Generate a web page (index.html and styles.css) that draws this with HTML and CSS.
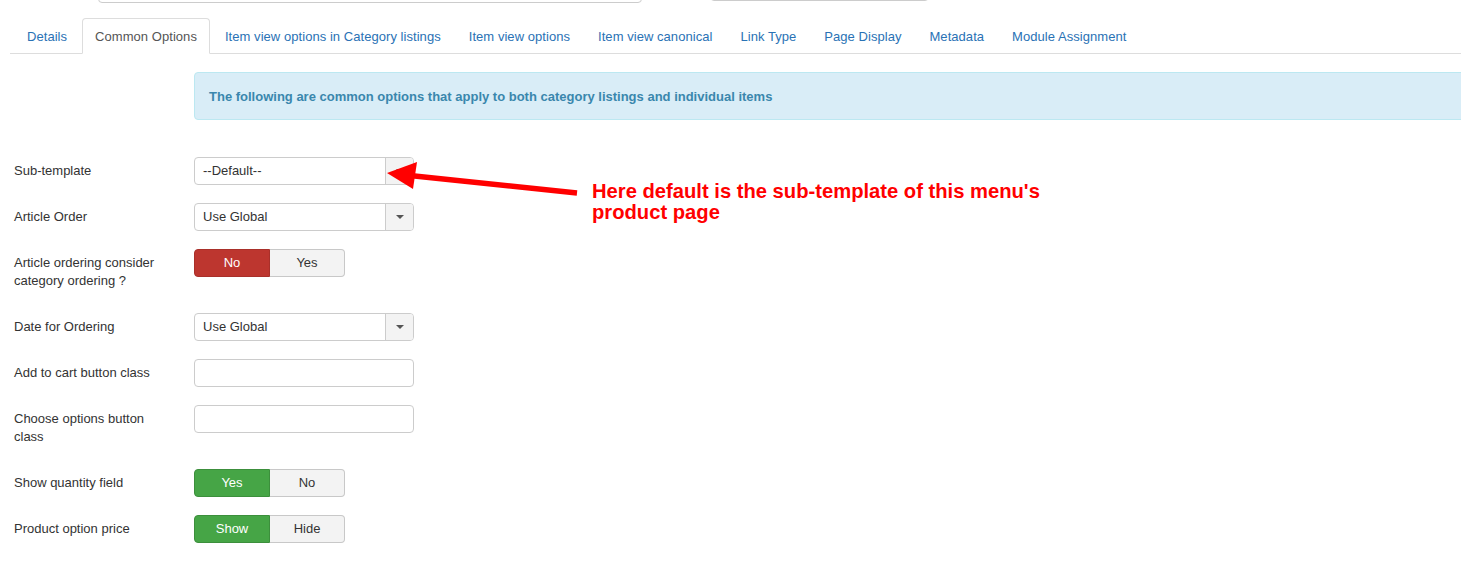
FILE: index.html
```html
<!DOCTYPE html>
<html>
<head>
<meta charset="utf-8">
<link rel="stylesheet" href="styles.css">
</head>
<body>
<div class="page">
  <div class="top-fields">
    <div class="top-input top-input-a"></div>
    <div class="top-input top-input-b"></div>
  </div>

  <ul class="nav-tabs">
    <li class="tab">Details</li>
    <li class="tab active">Common Options</li>
    <li class="tab">Item view options in Category listings</li>
    <li class="tab">Item view options</li>
    <li class="tab">Item view canonical</li>
    <li class="tab">Link Type</li>
    <li class="tab">Page Display</li>
    <li class="tab">Metadata</li>
    <li class="tab">Module Assignment</li>
  </ul>

  <div class="form">
    <div class="alert-row">
      <div class="alert">The following are common options that apply to both category listings and individual items</div>
    </div>

    <div class="control-group">
      <div class="control-label">Sub-template</div>
      <div class="select"><span class="select-text">--Default--</span><span class="select-btn"><span class="caret"></span></span></div>
    </div>

    <div class="control-group">
      <div class="control-label">Article Order</div>
      <div class="select"><span class="select-text">Use Global</span><span class="select-btn"><span class="caret"></span></span></div>
    </div>

    <div class="control-group">
      <div class="control-label">Article ordering consider category ordering ?</div>
      <div class="toggle"><span class="btn btn-danger">No</span><span class="btn">Yes</span></div>
    </div>

    <div class="control-group">
      <div class="control-label">Date for Ordering</div>
      <div class="select"><span class="select-text">Use Global</span><span class="select-btn"><span class="caret"></span></span></div>
    </div>

    <div class="control-group">
      <div class="control-label">Add to cart button class</div>
      <div class="text-input"></div>
    </div>

    <div class="control-group">
      <div class="control-label">Choose options button class</div>
      <div class="text-input"></div>
    </div>

    <div class="control-group">
      <div class="control-label">Show quantity field</div>
      <div class="toggle"><span class="btn btn-success">Yes</span><span class="btn">No</span></div>
    </div>

    <div class="control-group">
      <div class="control-label">Product option price</div>
      <div class="toggle"><span class="btn btn-success">Show</span><span class="btn">Hide</span></div>
    </div>
  </div>
</div>

<svg class="arrow" width="240" height="60" viewBox="380 150 240 60">
  <line x1="577" y1="193" x2="405" y2="175" stroke="#ff0000" stroke-width="5.5"/>
  <polygon points="387,173 417,162 413,189" fill="#ff0000"/>
</svg>
<div class="note">Here default is the sub-template of this menu's<br>product page</div>
</body>
</html>
```

FILE: styles.css
```css
html, body {
  margin: 0;
  padding: 0;
  background: #fff;
}

body {
  position: relative;
  font-family: "Liberation Sans", Arial, Helvetica, sans-serif;
  font-size: 13px;
  line-height: 18px;
  color: #333;
  overflow: hidden;
}

.page {
  padding-left: 10px;
}

.top-fields {
  display: flex;
  height: 4px;
  overflow: visible;
}

.top-input {
  height: 28px;
  margin-top: -25px;
  border: 1px solid #ccc;
  border-radius: 4px;
  box-sizing: border-box;
  background: #fff;
}

.top-input-a {
  width: 544px;
  margin-left: 88px;
}

.top-input-b {
  width: 219px;
  margin-left: 68px;
  margin-top: -27px;
}

.nav-tabs {
  list-style: none;
  margin: 14px 0 0 0;
  padding: 0 0 0 4px;
  display: flex;
  border-bottom: 1px solid #ddd;
}

.tab {
  padding: 9px 12px 7px;
  margin-right: 2px;
  margin-bottom: -1px;
  border: 1px solid transparent;
  border-radius: 4px 4px 0 0;
  color: #2a72b5;
  line-height: 18px;
  letter-spacing: 0.05px;
  white-space: nowrap;
}

.tab.active {
  color: #555;
  background: #fff;
  border-color: #ddd #ddd transparent #ddd;
}

.form {
  padding-left: 4px;
}

.alert-row {
  padding-left: 180px;
  margin-top: 18px;
  margin-right: -30px;
  margin-bottom: 37px;
}

.alert {
  background: #d9edf7;
  border: 1px solid #bce8f1;
  border-radius: 4px;
  color: #3a87ad;
  font-weight: bold;
  padding: 15px 14px 13px;
  line-height: 18px;
}

.control-group {
  display: flex;
  align-items: flex-start;
  margin-bottom: 18px;
}

.control-label {
  width: 160px;
  margin-right: 20px;
  padding: 5px 0;
  line-height: 18px;
  color: #333;
}

.select {
  width: 220px;
  height: 28px;
  box-sizing: border-box;
  border: 1px solid #ccc;
  border-radius: 4px;
  background: #fff;
  display: flex;
  overflow: hidden;
}

.select-text {
  flex: 1;
  padding: 4px 8px;
  line-height: 18px;
  color: #333;
}

.select-btn {
  width: 27px;
  border-left: 1px solid #ccc;
  background: #f3f3f3;
  display: flex;
  align-items: center;
  justify-content: center;
}

.caret {
  width: 0;
  height: 0;
  border-left: 4px solid transparent;
  border-right: 4px solid transparent;
  border-top: 4px solid #555;
}

.text-input {
  width: 220px;
  height: 28px;
  box-sizing: border-box;
  border: 1px solid #ccc;
  border-radius: 4px;
  background: #fff;
}

.toggle {
  display: flex;
  height: 28px;
}

.btn {
  box-sizing: border-box;
  height: 28px;
  width: 75px;
  padding: 4px 0;
  text-align: center;
  line-height: 18px;
  background: #f3f3f3;
  color: #333;
  border: 1px solid #c8c8c8;
  border-left: none;
  border-radius: 0 4px 4px 0;
}

.btn:first-child {
  width: 76px;
  border-left: 1px solid #c8c8c8;
  border-radius: 4px 0 0 4px;
}

.btn-danger {
  background: #bd362f;
  border-color: #a9302a !important;
  color: #fff;
}

.btn-success {
  background: #46a546;
  border-color: #3c8f3c !important;
  color: #fff;
}

.arrow {
  position: absolute;
  left: 380px;
  top: 150px;
}

.note {
  position: absolute;
  left: 592px;
  top: 181px;
  font-family: "Liberation Sans", Arial, sans-serif;
  font-weight: bold;
  font-size: 20.2px;
  line-height: 21px;
  color: #ff0000;
}
```
